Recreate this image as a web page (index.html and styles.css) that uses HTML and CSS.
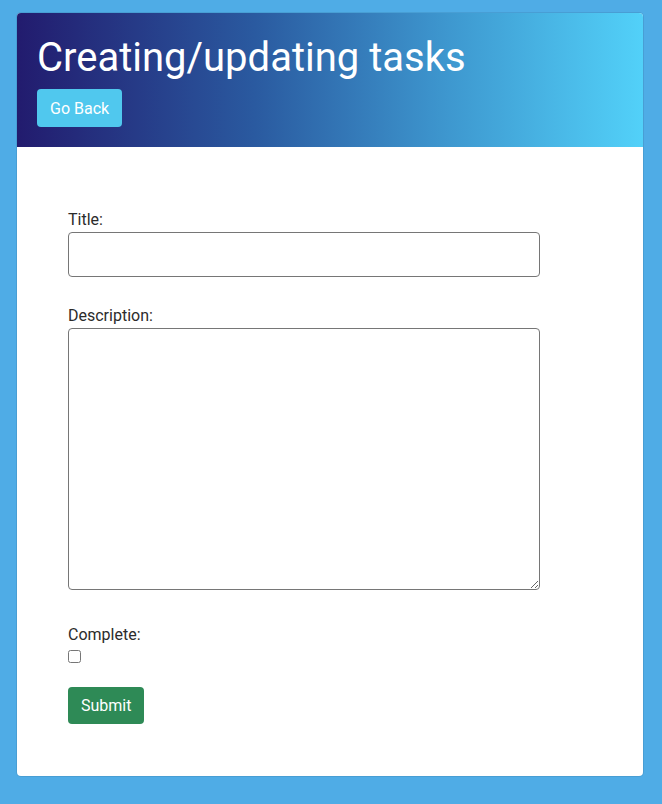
FILE: index.html
```
<!DOCTYPE html>
<html>
<head>
<meta charset="utf-8">
<link rel="stylesheet" href="styles.css">
</head>
<body>
<div class="card">
  <header class="card-header">
    <h1 class="title">Creating/updating tasks</h1>
    <button class="btn btn-back" type="button">Go Back</button>
  </header>
  <form class="card-body">
    <div class="group">
      <label class="label" for="title">Title:</label>
      <input class="input" id="title" type="text">
    </div>
    <div class="group">
      <label class="label" for="desc">Description:</label>
      <textarea class="input textarea" id="desc"></textarea>
    </div>
    <div class="group group-check">
      <label class="label" for="complete">Complete:</label>
      <input class="check" id="complete" type="checkbox">
    </div>
    <button class="btn btn-submit" type="button">Submit</button>
  </form>
</div>
</body>
</html>
```
FILE: styles.css
```
html, body {
  margin: 0;
  padding: 0;
}
body {
  background: #4face6;
  font-family: Roboto, "Liberation Sans", sans-serif;
  padding: 13px 19px 29px 17px;
}
.card {
  background: #ffffff;
  border-radius: 4px;
  overflow: hidden;
  box-shadow: 0 0 0 1px rgba(0,0,0,0.08);
}
.card-header {
  background: linear-gradient(to right, #221b6e 0%, #2a5aa0 38%, #3c92cb 66%, #52d1f9 100%);
  padding: 21px 20px 20px 20px;
}
.title {
  margin: 0 0 7px;
  font-size: 40px;
  line-height: 48px;
  font-weight: 400;
  color: #ffffff;
}
.btn {
  font-family: Roboto, "Liberation Sans", sans-serif;
  font-size: 16px;
  color: #ffffff;
  border: none;
  border-radius: 4px;
  cursor: pointer;
  display: block;
}
.btn-back {
  background: #50c8ee;
  height: 38px;
  padding: 0 13px;
}
.card-body {
  padding: 61px 51px 52px 51px;
}
.group {
  margin-bottom: 27px;
}
.label {
  display: block;
  font-size: 16px;
  line-height: 24px;
  color: #2b2b2b;
}
.input {
  display: block;
  box-sizing: border-box;
  width: 472px;
  height: 45px;
  margin: 0;
  border: 1px solid #767676;
  border-radius: 4px;
  font-family: Roboto, "Liberation Sans", sans-serif;
  font-size: 16px;
  padding: 6px 10px;
}
.textarea {
  height: 262px;
  resize: vertical;
  margin-bottom: 33px;
}
.group-check {
  margin-bottom: 0;
}
.check {
  display: block;
  width: 13px;
  height: 13px;
  margin: 3px 0 0 0;
}
.btn-submit {
  background: #2e8a56;
  height: 37px;
  padding: 0 13px;
  margin-top: 24px;
}
```
